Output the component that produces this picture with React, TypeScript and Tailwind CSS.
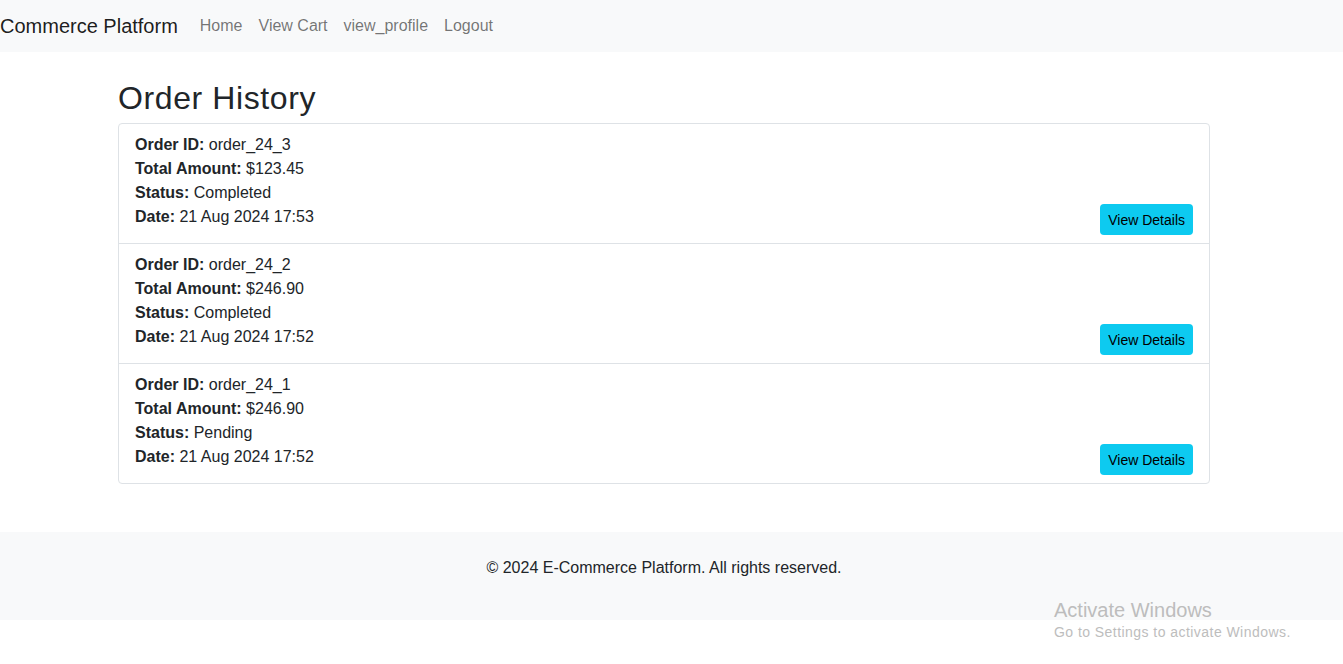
import React from "react";

type Order = {
  id: string;
  amount: string;
  status: string;
  date: string;
};

const orders: Order[] = [
  { id: "order_24_3", amount: "$123.45", status: "Completed", date: "21 Aug 2024 17:53" },
  { id: "order_24_2", amount: "$246.90", status: "Completed", date: "21 Aug 2024 17:52" },
  { id: "order_24_1", amount: "$246.90", status: "Pending", date: "21 Aug 2024 17:52" },
];

const OrderRow = ({ order, last }: { order: Order; last: boolean }) => (
  <div
    className={`flex items-end justify-between px-4 py-2 ${last ? "" : "border-b border-[#dee2e6]"}`}
  >
    <div className="leading-6 pt-[1px] pb-[6px]">
      <div>
        <span className="font-bold">Order ID:</span> {order.id}
      </div>
      <div>
        <span className="font-bold">Total Amount:</span> {order.amount}
      </div>
      <div>
        <span className="font-bold">Status:</span> {order.status}
      </div>
      <div>
        <span className="font-bold">Date:</span> {order.date}
      </div>
    </div>
    <button className="h-[31px] rounded px-2 text-sm bg-[#0dcaf0] text-black">View Details</button>
  </div>
);

export default function App() {
  return (
    <div
      className="relative min-h-[664px] bg-white text-[#212529] text-base"
      style={{ fontFamily: '"Liberation Sans", Arial, sans-serif' }}
    >
      {/* navbar */}
      <nav className="h-[52px] bg-[#f8f9fa] flex items-center">
        <span className="text-xl text-black/90 mr-[14px]">Commerce Platform</span>
        <div className="flex">
          <a className="px-2 text-black/55">Home</a>
          <a className="px-2 text-black/55">View Cart</a>
          <a className="px-2 text-black/55">view_profile</a>
          <a className="px-2 text-black/55">Logout</a>
        </div>
      </nav>

      <div className="pr-[15px]">
        <div className="mx-auto w-[1092px]">
          <h2 className="mt-[25px] pt-[2px] mb-[6px] text-[32px] leading-[38.4px] tracking-[0.6px] text-[#212529]">
            Order History
          </h2>
          <div className="rounded border border-[#dee2e6]">
            {orders.map((o, i) => (
              <OrderRow key={o.id} order={o} last={i === orders.length - 1} />
            ))}
          </div>
        </div>
      </div>

      <footer className="mt-12 bg-[#f8f9fa] pt-6 pb-10 pr-[15px] text-center leading-6">
        <p>© 2024 E-Commerce Platform. All rights reserved.</p>
      </footer>

      {/* windows watermark */}
      <div className="absolute left-[1054px] top-[596px] text-[#bdbdbd] pointer-events-none">
        <div className="text-xl leading-7">Activate Windows</div>
        <div className="text-sm leading-4 tracking-[0.45px]">Go to Settings to activate Windows.</div>
      </div>
    </div>
  );
}
